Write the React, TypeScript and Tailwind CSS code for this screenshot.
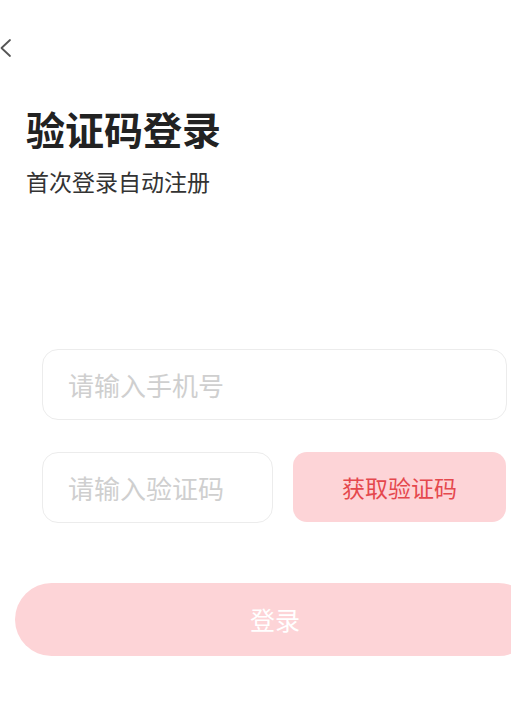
import { useState } from "react";

function App() {
  const [phone, setPhone] = useState("");
  const [code, setCode] = useState("");

  return (
    <div className="min-h-screen w-full overflow-hidden bg-white font-['Noto_Sans_CJK_SC',sans-serif]">
      <div className="w-[550px] flex flex-col">
        {/* back */}
        <button className="mt-[38px] ml-0 w-[14px] h-[20px] flex items-center">
          <svg width="12" height="20" viewBox="0 0 12 20" fill="none">
            <path d="M10 2 L1.5 10 L10 18" stroke="#555" strokeWidth="1.8" strokeLinecap="round" strokeLinejoin="round" />
          </svg>
        </button>

        <h1 className="mt-[50px] pl-[26px] text-[39px] leading-[40px] font-semibold text-[#222]">
          验证码登录
        </h1>
        <p className="mt-[21px] pl-[26px] text-[23px] leading-[25px] text-[#333]">
          首次登录自动注册
        </p>

        <div className="mt-[155px] pl-[42px] flex flex-col">
          <input
            type="text"
            value={phone}
            onChange={(e) => setPhone(e.target.value)}
            placeholder="请输入手机号"
            className="w-[465px] h-[71px] rounded-[16px] border border-[#ececec] px-[25px] text-[26px] text-[#333] placeholder:text-[#cfcfcf] outline-none"
          />
          <div className="mt-[32px] flex gap-[20px]">
            <input
              type="text"
              value={code}
              onChange={(e) => setCode(e.target.value)}
              placeholder="请输入验证码"
              className="w-[231px] h-[71px] rounded-[16px] border border-[#ececec] px-[25px] text-[26px] text-[#333] placeholder:text-[#cfcfcf] outline-none"
            />
            <button className="w-[213px] h-[70px] rounded-[14px] bg-[#fdd4d7] text-[23px] text-[#e5484d]">
              获取验证码
            </button>
          </div>
        </div>

        <button className="mt-[60px] ml-[15px] w-[520px] h-[73px] rounded-full bg-[#fdd4d7] text-[25px] text-white">
          登录
        </button>
      </div>
    </div>
  );
}

export default App;
